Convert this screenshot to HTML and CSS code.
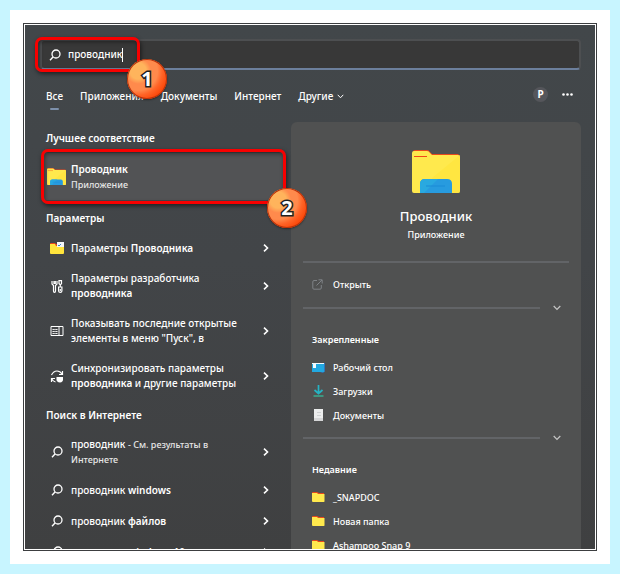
FILE: index.html
```html
<!DOCTYPE html>
<html lang="ru">
<head>
<meta charset="utf-8">
<title>Поиск</title>
<link rel="stylesheet" href="styles.css">
</head>
<body>
<svg class="defs" width="0" height="0" aria-hidden="true">
  <symbol id="search" viewBox="0 0 12 12"><circle cx="7" cy="5" r="4" fill="none" stroke="currentColor" stroke-width="1.3"/><path d="M4 8L1 11.300" stroke="currentColor" stroke-width="1.400" fill="none"/></symbol>
  <symbol id="right" viewBox="0 0 6 8"><path d="M1 .7L4.500 4L1 7.300" fill="none" stroke="currentColor" stroke-width="1.600"/></symbol>
  <symbol id="down" viewBox="0 0 8 6"><path d="M.7 1L4 4.500L7.300 1" fill="none" stroke="currentColor" stroke-width="1.200"/></symbol>
  <symbol id="explorer" viewBox="0 0 48 43"><path d="M1 5V2Q1 0 3 0H15Q17 0 18 2L20 4H46L48 6V8H1Z" fill="#e8481c"/><path d="M0 3Q0 1 2 1H15Q17 1 18 3L20 5H46Q48 5 48 7V41Q48 43 46 43H2Q0 43 0 41Z" fill="#ffe94d"/><path d="M48 5V41Q48 43 46 43H30L20 28Z" fill="#ffe43c" opacity=".7"/><path d="M2 6.500H15" stroke="#f04a18"/><path d="M8 43V34Q8 29 13 29H35Q40 29 40 34V43Z" fill="#279bdf"/><path d="M8 43V34Q8 29 13 29H26L12 43Z" fill="#29a9e0"/><path d="M14 36H33" stroke="#1b8bd6"/></symbol>
  <symbol id="folder" viewBox="0 0 13 10"><path d="M0 1Q0 0 1 0H5L7 1H12V3H0Z" fill="#e8481c"/><path d="M0 1H5L6 2H12.500V9.500Q12 10 11.500 10H1Q0 10 0 9Z" fill="#ffe94d"/></symbol>
</svg>
<main class="frame">
  <div class="launcher">
    <div class="search">
      <label class="search-icon" for="q"><svg width="12" height="12"><use href="#search"/></svg></label>
      <input id="q" type="text" value="проводник" aria-label="Поиск">
      <span class="caret"></span>
      <div class="mark mark-search"><span class="badge">1</span></div>
    </div>
    <nav class="tabs">
      <a class="active" href="#">Все</a>
      <a href="#">Приложения</a>
      <a href="#">Документы</a>
      <a href="#">Интернет</a>
      <button type="button">Другие <svg width="7" height="5"><use href="#down"/></svg></button>
      <button type="button" class="avatar">P</button>
      <button type="button" class="more" aria-label="Ещё"><svg width="11" height="3" viewBox="0 0 11 3"><circle cx="1.500" cy="1.500" r="1.300"/><circle cx="5.500" cy="1.500" r="1.300"/><circle cx="9.500" cy="1.500" r="1.300"/></svg></button>
    </nav>
    <div class="columns">
      <section class="results">
        <h2>Лучшее соответствие</h2>
        <a class="best" href="#">
          <svg width="19" height="17"><use href="#explorer"/></svg>
          <span class="best-text"><b>Проводник</b><small>Приложение</small></span>
          <span class="mark mark-best"><span class="badge">2</span></span>
        </a>
        <h2>Параметры</h2>
        <ul class="list">
          <li><a href="#"><svg class="ico" width="14" height="12" viewBox="0 0 14 12"><path d="M0 2Q0 1 1 1H5L6 2H13V5H0Z" fill="#e8481c"/><path d="M0 2H5L6 4H14V11Q14 12 13 12H1Q0 12 0 11Z" fill="#ffe43c"/><path d="M7 0H14V5H7Z" fill="#f4f6f8"/><path d="M8 3L9 4L11 2" stroke="#3b8ac4" fill="none"/></svg><span>Параметры <b>Проводника</b></span><svg class="go" width="6" height="8"><use href="#right"/></svg></a></li>
          <li><a href="#"><svg class="ico" width="12" height="13" viewBox="0 0 12 13"><path d="M1 1V4L2.500 5.500V11Q2.500 12.300 3.500 12.300T4.500 11V5.500L6 4V1M3 1V3.500H4.300V1" fill="none" stroke="currentColor" stroke-width="1.200"/><path d="M8 .6H10.500V3.500L9.300 5L8 3.500ZM9.300 5V7M7.600 7H10.900V11Q10.900 12.300 9.300 12.300T7.600 11ZM9.300 9V11" fill="none" stroke="currentColor" stroke-width="1.200"/></svg><span>Параметры разработчика <b>проводника</b></span><svg class="go" width="6" height="8"><use href="#right"/></svg></a></li>
          <li><a href="#"><svg class="ico" width="13" height="10" viewBox="0 0 13 10"><path d="M.5 .5H12.500V9.500H.5ZM8.500 .5V9.500" fill="none" stroke="currentColor"/><path d="M2 3.500H7M2 5.500H7M2 7.500H7" stroke="currentColor" stroke-dasharray="1.400 .4"/></svg><span>Показывать последние открытые элементы в меню "Пуск", в</span><svg class="go" width="6" height="8"><use href="#right"/></svg></a></li>
          <li><a href="#"><svg class="ico" width="13" height="13" viewBox="0 0 13 13"><path d="M1 5Q3 1 6.500 1Q9.500 1 11.500 4M12 1V4.500H8.500M1 12V8.500H4.500M1.300 9Q2.500 11.500 5 12" fill="none" stroke="currentColor" stroke-width="1.200"/><path d="M6 7H12.500V9.500Q12.500 12 9.500 12.500Q6 12 6 9.500Z" fill="currentColor"/></svg><span>Синхронизировать параметры <b>проводника</b> и другие параметры</span><svg class="go" width="6" height="8"><use href="#right"/></svg></a></li>
        </ul>
        <h2>Поиск в Интернете</h2>
        <ul class="list">
          <li><a href="#"><svg class="ico" width="12" height="12"><use href="#search"/></svg><span>проводник <small>- См. результаты в Интернете</small></span><svg class="go" width="6" height="8"><use href="#right"/></svg></a></li>
          <li><a href="#"><svg class="ico" width="12" height="12"><use href="#search"/></svg><span>проводник <b>windows</b></span><svg class="go" width="6" height="8"><use href="#right"/></svg></a></li>
          <li><a href="#"><svg class="ico" width="12" height="12"><use href="#search"/></svg><span>проводник <b>файлов</b></span><svg class="go" width="6" height="8"><use href="#right"/></svg></a></li>
          <li><a href="#"><svg class="ico" width="12" height="12"><use href="#search"/></svg><span>проводник <b>windows 10</b></span><svg class="go" width="6" height="8"><use href="#right"/></svg></a></li>
        </ul>
      </section>
      <aside class="details">
        <header>
          <svg width="48" height="43"><use href="#explorer"/></svg>
          <h1>Проводник</h1>
          <p>Приложение</p>
        </header>
        <hr>
        <a class="open" href="#"><svg width="11" height="11" viewBox="0 0 11 11"><path d="M5 1.500H2Q.8 1.500 .8 3V9Q.8 10.200 2 10.200H8Q9.300 10.200 9.300 9V6M6.500 .8H10.200V4.500M10 1L4.500 6.500" fill="none" stroke="#7e8286"/></svg>Открыть</a>
        <div class="split"><hr><button type="button" aria-label="Развернуть"><svg width="8" height="6"><use href="#down"/></svg></button></div>
        <h3>Закрепленные</h3>
        <ul class="files">
          <li><a href="#"><svg width="13" height="11" viewBox="0 0 13 11"><path d="M0 1H12.500V10H0Z" fill="#22a8e0"/><path d="M0 1H12V2H4V6H1V2H0Z" fill="#f2fbff"/><path d="M12 1H13V9L11 11L8 10H12Z" fill="#3275bd"/></svg>Рабочий стол</a></li>
          <li><a href="#"><svg width="13" height="12" viewBox="0 0 13 12"><path d="M6.500 0V8M2.500 5L6.500 8.500L10.500 5" fill="none" stroke="#25b3c4" stroke-width="1.700"/><path d="M1.500 11H11.500" stroke="#3aa88c" stroke-width="1.600"/></svg>Загрузки</a></li>
          <li><a href="#"><svg width="13" height="12" viewBox="0 0 13 12"><path d="M2 0H11V12H2Z" fill="#eceded"/><path d="M5 3.500H9M5 6.500H9" fill="none" stroke="#cfd1d2"/><path d="M2 9H11V12H2Z" fill="#d5d6d7"/></svg>Документы</a></li>
        </ul>
        <div class="split"><hr><button type="button" aria-label="Развернуть"><svg width="8" height="6"><use href="#down"/></svg></button></div>
        <h3>Недавние</h3>
        <ul class="files">
          <li><a href="#"><svg width="13" height="10"><use href="#folder"/></svg>_SNAPDOC</a></li>
          <li><a href="#"><svg width="13" height="10"><use href="#folder"/></svg>Новая папка</a></li>
          <li><a href="#"><svg width="13" height="10"><use href="#folder"/></svg>Ashampoo Snap 9</a></li>
        </ul>
      </aside>
    </div>
  </div>
</main>
</body>
</html>
```
FILE: styles.css
```css
* { box-sizing: border-box; }
html { background: #c8f5ff; }
body {
  margin: 10px;
  padding: 13px;
  height: calc(100vh - 20px);
  background: #fff;
  color: #fff;
  font: 500 10px/15px "Noto Sans", "Open Sans", sans-serif;
}
a { color: inherit; text-decoration: none; }
button { border: 0; padding: 0; background: none; color: inherit; font: inherit; }
ul { list-style: none; margin: 0; padding: 0; }
h1, h2, h3, p { margin: 0; font-weight: 500; }
b { font-weight: 600; }
svg { display: block; flex: none; }
.defs { position: absolute; }

.frame { height: 100%; border: 1px solid #3c3e40; padding: 1px; }
.launcher {
  height: 100%;
  overflow: hidden;
  padding: 14px 14px 0 15px;
  background: linear-gradient(#42474a, #424548 45%, #3f4041);
}

.search {
  position: relative;
  display: flex;
  align-items: center;
  height: 31px;
  padding-left: 7px;
  background: #383838;
  border: 2px solid #4d4f51;
  border-bottom: 2px solid #6c7f9c;
  border-radius: 4px;
}
.search-icon { margin-right: 7px; }
.search input {
  field-sizing: content;
  border: 0;
  padding: 0;
  outline: 0;
  background: none;
  color: #fff;
  font: inherit;
}
.caret { width: 1px; height: 14px; background: #fff; }

.mark { position: absolute; border: 3px solid #f80000; border-radius: 7px; box-shadow: 1px 2px 4px #0008, inset 1px 2px 4px #0006; }
.mark-search { left: -7px; top: -4px; width: 105px; height: 35px; }
.mark-best { inset: -4px -3px; }
.badge {
  position: absolute;
  right: -30px;
  bottom: -30px;
  z-index: 1;
  width: 40px;
  height: 40px;
  border-radius: 50%;
  background: radial-gradient(circle at 28% 30%, #ffb45c 0 20%, #ff8a4c 32% 48%, #ff6427 60%, #fb4a0c 75%);
  box-shadow: inset 0 0 0 1px #b8320a, 0 1px 2px #0006;
  font: 700 20px/40px "Noto Sans", sans-serif;
  text-align: center;
  color: #fff;
  -webkit-text-stroke: 3px #222;
  paint-order: stroke fill;
}
.mark-best .badge { right: -24px; bottom: -27px; }

.tabs { display: flex; align-items: center; gap: 17px; height: 52px; padding: 0 8px 0 6px; }
.tabs a { position: relative; }
.tabs .active::after {
  content: "";
  position: absolute;
  left: 4px;
  bottom: -6px;
  width: 9px;
  height: 2px;
  border-radius: 1px;
  background: #7d90ab;
}
.tabs button { display: flex; align-items: center; gap: 4px; }
.tabs .avatar {
  justify-content: center;
  width: 15px;
  height: 15px;
  margin: 0 -3px 4px auto;
  border-radius: 50%;
  background: #55565b;
  font-weight: 700;
}
.tabs .more { margin-bottom: 4px; }
.more { fill: #fff; }

.columns { display: grid; grid-template-columns: 243fr 290fr; gap: 8px; }
.results { min-width: 0; padding-left: 4px; padding-top: 1px; }
.results h2 { padding-left: 2px; font-size: 10px; line-height: 30px; font-weight: 600; }
.best {
  position: relative;
  display: flex;
  align-items: center;
  gap: 5px;
  height: 47px;
  margin-bottom: 3px;
  padding: 0 3px;
  background: #525355;
}
.best-text { display: flex; flex-direction: column; }
small { font-size: 9px; color: #e6e6e6; }
.list { display: grid; gap: 1px; padding-bottom: 2px; }
.list a { display: flex; align-items: center; min-height: 30px; padding: 7px 14px 7px 6px; }
.list a > span { width: 170px; margin-right: auto; }
.ico { width: 14px; margin-right: 7px; }

.details { min-width: 0; height: 480px; padding: 28px 12px 0; border-radius: 6px; background: #505151; font-size: 9px; }
.details header { display: flex; flex-direction: column; align-items: center; padding-bottom: 19px; }
.details h1 { margin-top: 13px; font-size: 13px; line-height: 21px; }
.details hr { flex: 1; height: 2px; margin: 0; border: 0; background: #626467; }
.open { display: flex; align-items: center; gap: 10px; height: 42px; padding-left: 9px; }
.split { display: flex; align-items: center; gap: 13px; height: 6px; padding-right: 8px; color: #c5c5c5; }
.details h3 { padding: 17px 9px 3px; font-size: 9px; line-height: 24px; font-weight: 600; }
.files { padding-bottom: 8px; }
.files a { display: flex; align-items: center; gap: 8px; height: 24px; padding-left: 9px; }
```
